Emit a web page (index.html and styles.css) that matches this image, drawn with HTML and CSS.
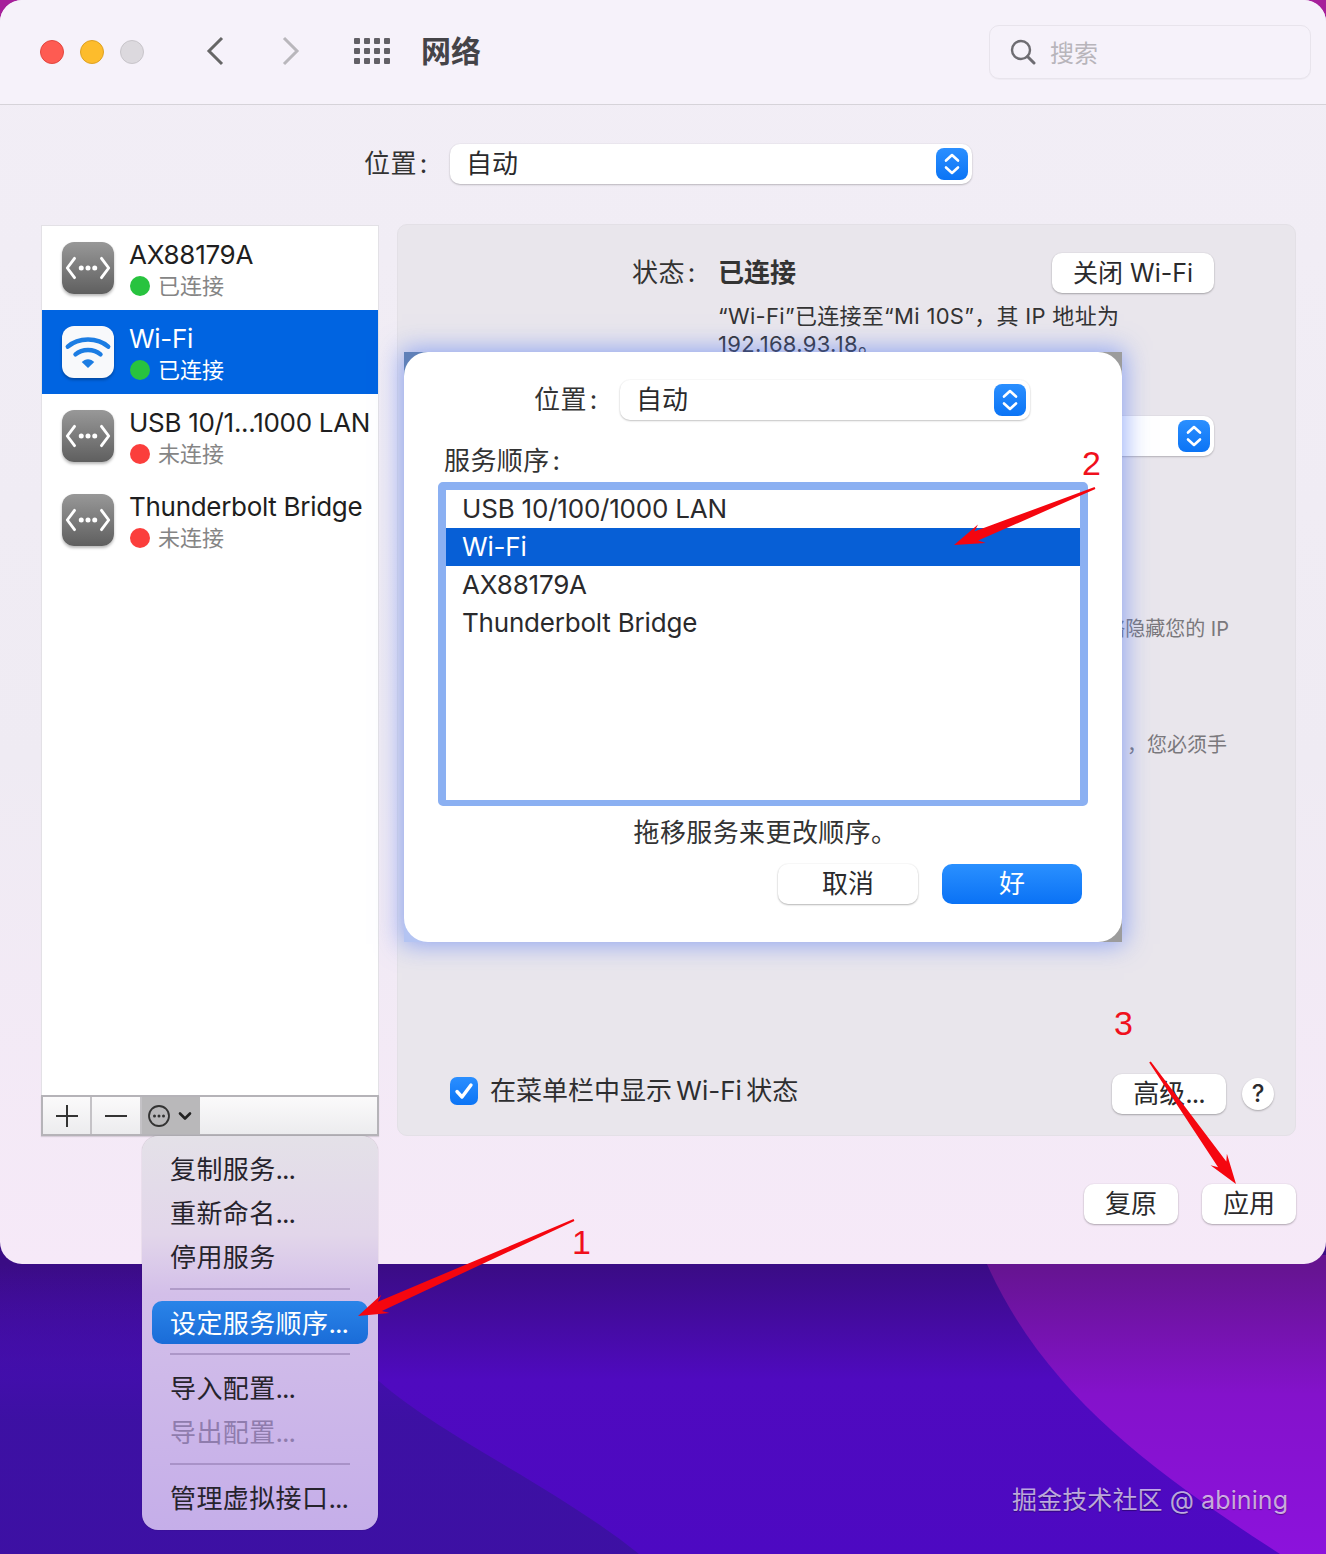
FILE: index.html
```html
<!DOCTYPE html>
<html lang="zh-CN">
<head>
<meta charset="utf-8">
<title>网络</title>
<link rel="stylesheet" href="styles.css">
</head>
<body>
<svg class="defs" width="0" height="0" aria-hidden="true">
  <symbol id="net" viewBox="0 0 54 54">
    <path d="M13 17 L5.5 27 L13 37 M41 17 L48.5 27 L41 37" fill="none" stroke="#fff" stroke-width="3" stroke-linecap="round" stroke-linejoin="round"/>
    <circle cx="20" cy="27" r="2.6" fill="#fff"/><circle cx="27" cy="27" r="2.6" fill="#fff"/><circle cx="34" cy="27" r="2.6" fill="#fff"/>
  </symbol>
  <symbol id="stepper" viewBox="0 0 32 32">
    <path d="M10 12.5 L16 7 L22 12.5 M10 19.5 L16 25 L22 19.5" fill="none" stroke="#fff" stroke-width="2.6" stroke-linecap="round" stroke-linejoin="round"/>
  </symbol>
</svg>
<div class="desktop">
  <svg class="wallpaper" viewBox="0 0 1326 1554" preserveAspectRatio="none" aria-hidden="true">
    <defs>
      <linearGradient id="base" x1="0" y1="1264" x2="0" y2="1554" gradientUnits="userSpaceOnUse">
        <stop offset="0" stop-color="#3a0c84"/><stop offset=".4" stop-color="#4f0abf"/><stop offset="1" stop-color="#4d09c2"/>
      </linearGradient>
      <linearGradient id="mag" x1="0" y1="1264" x2="0" y2="1554" gradientUnits="userSpaceOnUse">
        <stop offset="0" stop-color="#651490"/><stop offset=".45" stop-color="#8412cb"/><stop offset="1" stop-color="#8c12dc"/>
      </linearGradient>
      <linearGradient id="wedge" x1="0" y1="1264" x2="0" y2="1420" gradientUnits="userSpaceOnUse">
        <stop offset="0" stop-color="#3b11a0" stop-opacity="0"/><stop offset="1" stop-color="#3b11a0" stop-opacity=".9"/>
      </linearGradient>
    </defs>
    <rect width="1326" height="40" fill="#a6209a"/>
    <rect y="40" width="1326" height="1514" fill="url(#base)"/>
    <path d="M0 1264 L190 1264 C250 1320 330 1345 380 1382 C440 1435 560 1490 639 1554 L0 1554 Z" fill="url(#wedge)"/>
    <path d="M983 1255 C1040 1390 1150 1470 1280 1554 L1326 1554 L1326 1255 Z" fill="url(#mag)"/>
  </svg>

  <main class="window">
    <header class="titlebar">
      <div class="lights">
        <span class="light light-red"></span>
        <span class="light light-yellow"></span>
        <span class="light light-gray"></span>
      </div>
      <svg class="nav nav-back" width="18" height="30" viewBox="0 0 18 30"><path d="M16 2 L3 15 L16 28" fill="none" stroke="#666" stroke-width="3"/></svg>
      <svg class="nav nav-forward" width="18" height="30" viewBox="0 0 18 30"><path d="M2 2 L15 15 L2 28" fill="none" stroke="#b9b7bc" stroke-width="3"/></svg>
      <svg class="grid-icon" width="36" height="26" viewBox="0 0 36 26" fill="#626066">
        <rect x="0" y="0" width="6" height="6" rx="1"/><rect x="10" y="0" width="6" height="6" rx="1"/><rect x="20" y="0" width="6" height="6" rx="1"/><rect x="30" y="0" width="6" height="6" rx="1"/>
        <rect x="0" y="10" width="6" height="6" rx="1"/><rect x="10" y="10" width="6" height="6" rx="1"/><rect x="20" y="10" width="6" height="6" rx="1"/><rect x="30" y="10" width="6" height="6" rx="1"/>
        <rect x="0" y="20" width="6" height="6" rx="1"/><rect x="10" y="20" width="6" height="6" rx="1"/><rect x="20" y="20" width="6" height="6" rx="1"/><rect x="30" y="20" width="6" height="6" rx="1"/>
      </svg>
      <h1 class="title">网络</h1>
      <div class="search">
        <svg width="26" height="26" viewBox="0 0 26 26"><circle cx="11" cy="11" r="9" fill="none" stroke="#6e6c72" stroke-width="2.4"/><path d="M17.5 17.5 L24 24" stroke="#6e6c72" stroke-width="3" stroke-linecap="round"/></svg>
        <span class="search-text">搜索</span>
      </div>
    </header>

    <div class="location">
      <span class="label">位置<span class="colon">:</span></span>
      <div class="select select-main">
        <span>自动</span>
        <span class="stepper"><svg width="32" height="32"><use href="#stepper"/></svg></span>
      </div>
    </div>

    <div class="main">
      <aside class="sidebar">
        <ul class="services">
          <li class="service">
            <span class="tile tile-net"><svg width="52" height="52"><use href="#net"/></svg></span>
            <div class="service-text"><div class="service-name">AX88179A</div><div class="service-status"><i class="dot dot-green"></i>已连接</div></div>
          </li>
          <li class="service service-active">
            <span class="tile tile-wifi">
              <svg width="52" height="52" viewBox="0 0 54 54"><path d="M6 21.5 C17 11.5 37 11.5 48 21.5" fill="none" stroke="#1c7de3" stroke-width="4.6" stroke-linecap="round"/><path d="M14 29.5 C21 23.5 33 23.5 40 29.5" fill="none" stroke="#1c7de3" stroke-width="4.6" stroke-linecap="round"/><path d="M20.5 37.5 C24 33.5 30 33.5 33.5 37.5 L27 43.5 Z" fill="#1c7de3"/></svg>
            </span>
            <div class="service-text"><div class="service-name">Wi-Fi</div><div class="service-status"><i class="dot dot-green"></i>已连接</div></div>
          </li>
          <li class="service">
            <span class="tile tile-net"><svg width="52" height="52"><use href="#net"/></svg></span>
            <div class="service-text"><div class="service-name">USB 10/1...1000 LAN</div><div class="service-status"><i class="dot dot-red"></i>未连接</div></div>
          </li>
          <li class="service">
            <span class="tile tile-net"><svg width="52" height="52"><use href="#net"/></svg></span>
            <div class="service-text"><div class="service-name">Thunderbolt Bridge</div><div class="service-status"><i class="dot dot-red"></i>未连接</div></div>
          </li>
        </ul>
        <div class="toolbar">
          <span class="tool tool-small"><svg width="22" height="22" viewBox="0 0 22 22"><path d="M11 0 V22 M0 11 H22" stroke="#333" stroke-width="2"/></svg></span>
          <span class="tool tool-small"><svg width="22" height="22" viewBox="0 0 22 22"><path d="M0 11 H22" stroke="#333" stroke-width="2"/></svg></span>
          <span class="tool tool-more"><svg width="50" height="24" viewBox="0 0 50 24"><circle cx="13" cy="12" r="10" fill="none" stroke="#333" stroke-width="1.8"/><circle cx="8.5" cy="12" r="1.5" fill="#333"/><circle cx="13" cy="12" r="1.5" fill="#333"/><circle cx="17.5" cy="12" r="1.5" fill="#333"/><path d="M34 9.5 L39 14.5 L44 9.5" fill="none" stroke="#222" stroke-width="2.6" stroke-linecap="round" stroke-linejoin="round"/></svg></span>
        </div>
      </aside>

      <section class="panel">
        <div class="status-row">
          <span class="status-label">状态<span class="colon">:</span></span>
          <strong class="status-value">已连接</strong>
          <button class="btn btn-wifi">关闭 Wi-Fi</button>
        </div>
        <p class="desc">“Wi-Fi”已连接至“Mi 10S”，其 IP 地址为<br>192.168.93.18。</p>
        <div class="select select-network">
          <span></span>
          <span class="stepper"><svg width="32" height="32"><use href="#stepper"/></svg></span>
        </div>
        <p class="note note-first">络隐藏您的 IP</p>
        <p class="note note-second">，您必须手</p>
        <div class="panel-bottom">
          <label class="check-group">
            <span class="checkbox"><svg width="28" height="28" viewBox="0 0 28 28"><path d="M7 14.5 L12 20 L21 8" fill="none" stroke="#fff" stroke-width="3.4" stroke-linecap="round" stroke-linejoin="round"/></svg></span>
            <span class="check-text">在菜单栏中显示 Wi-Fi 状态</span>
          </label>
          <button class="btn btn-advanced">高级<span class="dots">...</span></button>
          <button class="btn-help">?</button>
        </div>
      </section>
    </div>

    <footer class="footer">
      <button class="btn btn-foot">复原</button>
      <button class="btn btn-foot">应用</button>
    </footer>

    <div class="sheet-wrap">
      <div class="sheet">
        <div class="sheet-location">
          <span class="label">位置<span class="colon">:</span></span>
          <div class="select select-sheet">
            <span>自动</span>
            <span class="stepper"><svg width="32" height="32"><use href="#stepper"/></svg></span>
          </div>
        </div>
        <div class="order-label">服务顺序<span class="colon">:</span></div>
        <ul class="order-list">
          <li class="order-item">USB 10/100/1000 LAN</li>
          <li class="order-item order-active">Wi-Fi</li>
          <li class="order-item">AX88179A</li>
          <li class="order-item">Thunderbolt Bridge</li>
        </ul>
        <p class="hint">拖移服务来更改顺序。</p>
        <div class="sheet-buttons">
          <button class="btn btn-sheet">取消</button>
          <button class="btn btn-sheet btn-primary">好</button>
        </div>
      </div>
    </div>
  </main>

  <nav class="menu">
    <div class="menu-item">复制服务<span class="dots">...</span></div>
    <div class="menu-item">重新命名<span class="dots">...</span></div>
    <div class="menu-item">停用服务</div>
    <hr class="menu-sep">
    <div class="menu-selected">设定服务顺序<span class="dots">...</span></div>
    <hr class="menu-sep">
    <div class="menu-item">导入配置<span class="dots">...</span></div>
    <div class="menu-item menu-disabled">导出配置<span class="dots">...</span></div>
    <hr class="menu-sep">
    <div class="menu-item">管理虚拟接口<span class="dots">...</span></div>
  </nav>

  <div class="watermark">掘金技术社区 @ abining</div>

  <svg class="arrows" viewBox="0 0 1326 1554" aria-hidden="true">
    <polygon fill="#f5060f" points="574.4,1220.9 381.9,1310.9 389.5,1313 358,1316 381.3,1294.7 377.9,1301.7 573.6,1219.1"/>
    <polygon fill="#f5060f" points="1095.4,488.9 978.1,540.6 985.6,543 954,545 978,524.5 974.3,531.4 1094.6,487.1"/>
    <polygon fill="#f5060f" points="1149.2,1062.6 1218.1,1167.3 1210.5,1165.3 1236,1184 1226.9,1153.7 1226.3,1161.5 1150.8,1061.4"/>
  </svg>
  <span class="num num-1">1</span>
  <span class="num num-2">2</span>
  <span class="num num-3">3</span>
</div>
</body>
</html>
```

FILE: styles.css
```css
* { box-sizing: border-box; }
html, body { margin: 0; padding: 0; }
body {
  font-family: "Inter", "Noto Sans CJK SC", sans-serif;
  font-size: 26px;
  color: #2a2a2c;
}
ul { list-style: none; margin: 0; padding: 0; }
p, h1 { margin: 0; }
button { font: inherit; color: inherit; border: 0; padding: 0; }
.defs { position: absolute; }
.colon { margin-left: 3px; }
.dots { letter-spacing: -1px; }

.desktop { position: relative; width: 1326px; height: 1554px; overflow: hidden; }
.wallpaper { position: absolute; inset: 0; width: 1326px; height: 1554px; }

.window {
  position: relative;
  height: 1264px;
  background: linear-gradient(#f2eef6, #efebf3 60%, #f6e9f8);
  border-radius: 22px;
}

/* title bar */
.titlebar {
  display: flex;
  align-items: center;
  height: 105px;
  padding: 0 15px 0 40px;
  background: #f6f2fa;
  border-bottom: 1px solid #d6d3d9;
  border-radius: 22px 22px 0 0;
}
.lights { display: flex; gap: 16px; margin-top: -1px; }
.light { width: 24px; height: 24px; border-radius: 50%; }
.light-red { background: #fe5b52; border: 1px solid #e2463e; }
.light-yellow { background: #fdbc2c; border: 1px solid #dea123; }
.light-gray { background: #dcd9de; border: 1px solid #c8c5ca; }
.nav { margin-top: -3px; }
.nav-back { margin-left: 62px; }
.nav-forward { margin-left: 58px; }
.grid-icon { margin-left: 54px; margin-top: -3px; }
.title { margin-left: 31px; font-size: 30px; line-height: 40px; font-weight: 700; color: #454448; margin-top: -3px; }
.search {
  display: flex;
  align-items: center;
  margin-left: auto;
  width: 322px;
  height: 54px;
  margin-top: -1px;
  padding-left: 20px;
  border: 1px solid #e8e4ec;
  border-radius: 10px;
  background: #f6f2fa;
  box-shadow: 0 1px 1px rgba(0, 0, 0, .03);
}
.search-text { margin-left: 14px; font-size: 24px; color: #b8b5bb; }

/* location */
.location { display: flex; align-items: center; height: 40px; margin-top: 39px; padding-left: 364px; }
.label { width: 86px; font-size: 26px; line-height: 40px; letter-spacing: .4px; color: #333; }
.select {
  display: flex;
  align-items: center;
  justify-content: space-between;
  height: 40px;
  padding: 0 4px 0 16px;
  font-size: 26px;
  line-height: 40px;
  background: #fff;
  border-radius: 10px;
  box-shadow: 0 1px 2px rgba(0, 0, 0, .22), 0 0 0 1px rgba(0, 0, 0, .02);
}
.select-main { width: 522px; }
.stepper { display: block; width: 32px; height: 32px; border-radius: 8px; background: linear-gradient(#2b8fff, #0b74f5); }
.stepper svg { display: block; }

/* main */
.main { display: flex; gap: 18px; height: 912px; margin-top: 40px; padding: 0 30px 0 41px; }
.sidebar { display: flex; flex-direction: column; width: 338px; margin-top: 1px; }
.services { flex: 1; background: #fff; border: 1px solid #e3e1e6; border-bottom: 0; }
.service { display: flex; gap: 15px; height: 84px; padding: 16px 0 0 20px; }
.service-active { background: #0064e1; color: #fff; }
.tile { flex: none; display: block; width: 52px; height: 52px; border-radius: 12px; box-shadow: 0 2px 3px rgba(0, 0, 0, .28); }
.tile svg { display: block; }
.tile-net { background: linear-gradient(#989898, #5f5f5f); }
.tile-wifi { background: #f8f9fb; }
.service-text { margin-top: -2px; white-space: nowrap; }
.service-name { font-size: 26px; line-height: 30px; letter-spacing: -.3px; color: #1e1e20; }
.service-active .service-name { color: #fff; }
.service-status { display: flex; align-items: center; margin-top: 1px; font-size: 22px; line-height: 30px; color: #858585; }
.service-active .service-status { color: #fff; }
.dot { width: 20px; height: 20px; margin: 0 8px 0 1px; border-radius: 50%; }
.dot-green { background: #28c33f; }
.dot-red { background: #fb3e3c; }

.toolbar {
  display: flex;
  height: 41px;
  border: 2px solid #b5b3b8;
  background: linear-gradient(#fbfafb, #ececee);
  box-shadow: 0 1px 1px rgba(0, 0, 0, .12);
}
.tool { display: flex; align-items: center; justify-content: center; }
.tool-small { width: 50px; border-right: 2px solid #c4c2c6; }
.tool-small:first-child { width: 49px; }
.tool-more { width: 58px; background: #b9b8ba; }

.panel {
  display: flex;
  flex-direction: column;
  flex: 1;
  padding-top: 28px;
  background: #e9e6ec;
  border: 1px solid #e3e0e6;
  border-radius: 10px;
}
.status-row { display: flex; align-items: center; height: 40px; margin: 0 81px 0 234px; }
.status-label { width: 86px; line-height: 40px; letter-spacing: .4px; color: #333; }
.status-value { font-weight: 700; line-height: 40px; color: #333; }
.btn {
  display: block;
  height: 40px;
  line-height: 38px;
  text-align: center;
  background: #fff;
  border-radius: 10px;
  box-shadow: 0 1px 2px rgba(0, 0, 0, .28), 0 0 0 1px rgba(0, 0, 0, .02);
}
.btn-wifi { margin-left: auto; width: 162px; font-size: 25px; }
.desc { margin: 9px 0 0 320px; font-size: 22px; line-height: 28px; letter-spacing: .3px; color: #333; white-space: nowrap; }
.select-network { margin: 58px 81px 0 320px; }
.note { margin-right: 66px; font-size: 20px; line-height: 28px; text-align: right; color: #7a787c; }
.note-first { margin-top: 159px; }
.note-second { margin-top: 88px; margin-right: 68px; }
.panel-bottom { display: flex; align-items: center; height: 40px; margin: auto 21px 21px 52px; }
.check-group { display: flex; align-items: center; gap: 12px; margin-bottom: 6px; }
.checkbox { display: block; width: 28px; height: 28px; border-radius: 7px; background: linear-gradient(#2b8fff, #0b74f5); }
.checkbox svg { display: block; }
.check-text { line-height: 30px; word-spacing: -3px; color: #2e2e30; }
.btn-advanced { width: 114px; margin-left: auto; }
.btn-help {
  width: 32px;
  height: 32px;
  margin-left: 16px;
  font-size: 24px;
  font-weight: 500;
  line-height: 30px;
  background: #fff;
  border-radius: 50%;
  box-shadow: 0 1px 2px rgba(0, 0, 0, .28);
}

.footer { display: flex; justify-content: flex-end; gap: 24px; margin-top: 48px; padding-right: 30px; }
.btn-foot { width: 94px; }

/* sheet */
.sheet-wrap {
  position: absolute;
  left: 404px;
  top: 352px;
  width: 718px;
  height: 590px;
  background: conic-gradient(#9c9c9c 0 180deg, #b4c4f2 180deg 270deg, #5f80b8 270deg 360deg);
  box-shadow: 0 0 24px 2px rgba(80, 120, 245, .62);
}
.sheet { height: 590px; padding-top: 28px; background: #fff; border-radius: 24px; }
.sheet-location { display: flex; align-items: center; padding-left: 130px; }
.select-sheet { width: 410px; }
.order-label { margin: 27px 0 0 40px; line-height: 28px; letter-spacing: .4px; color: #333; }
.order-list {
  width: 650px;
  height: 324px;
  margin: 7px 0 0 34px;
  background: #fff;
  border: solid #8bb0f2;
  border-width: 8px 8px 6px 8px;
  border-radius: 5px;
}
.order-item { height: 38px; padding-left: 16px; line-height: 38px; letter-spacing: -.2px; color: #2a2a2c; }
.order-active { background: #075fd6; color: #fff; }
.hint { margin-top: 13px; padding-left: 5px; text-align: center; line-height: 28px; letter-spacing: .4px; color: #333; }
.sheet-buttons { display: flex; justify-content: flex-end; gap: 24px; margin: 17px 40px 0 0; }
.btn-sheet { width: 140px; }
.btn-primary { background: linear-gradient(#2a90ff, #0a72f5); color: #fff; box-shadow: none; }

/* menu */
.menu {
  position: absolute;
  left: 142px;
  top: 1136px;
  width: 236px;
  height: 394px;
  padding-top: 11px;
  border-radius: 16px;
  background: linear-gradient(#e4e1e8 0, #e2d6ea 25%, #d3bfe9 40%, #c5aee9 100%);
  box-shadow: 0 0 1px rgba(0, 0, 0, .45);
}
.menu-item { height: 44px; padding-left: 28px; line-height: 46px; letter-spacing: .4px; color: #26232c; white-space: nowrap; }
.menu-disabled { color: #8f7cad; }
.menu-sep { height: 2px; margin: 9px 28px 11px; border: 0; background: rgba(110, 85, 140, .35); }
.menu-selected {
  height: 43px;
  margin: 0 10px 1px;
  padding-left: 18px;
  line-height: 46px;
  letter-spacing: .4px;
  color: #fff;
  white-space: nowrap;
  background: linear-gradient(#2a84e8, #1a6cd8);
  border-radius: 10px;
}

/* overlays */
.watermark {
  position: absolute;
  left: 1012px;
  top: 1484px;
  font-size: 25px;
  line-height: 32px;
  letter-spacing: .1px;
  color: rgba(255, 255, 255, .66);
  text-shadow: 0 1px 1px rgba(0, 0, 0, .35);
  white-space: nowrap;
}
.arrows { position: absolute; inset: 0; width: 1326px; height: 1554px; pointer-events: none; }
.num { position: absolute; font-family: "Liberation Sans", sans-serif; font-size: 34px; line-height: 40px; color: #f0101c; }
.num-1 { left: 572px; top: 1222px; }
.num-2 { left: 1082px; top: 443px; }
.num-3 { left: 1114px; top: 1003px; }
```
